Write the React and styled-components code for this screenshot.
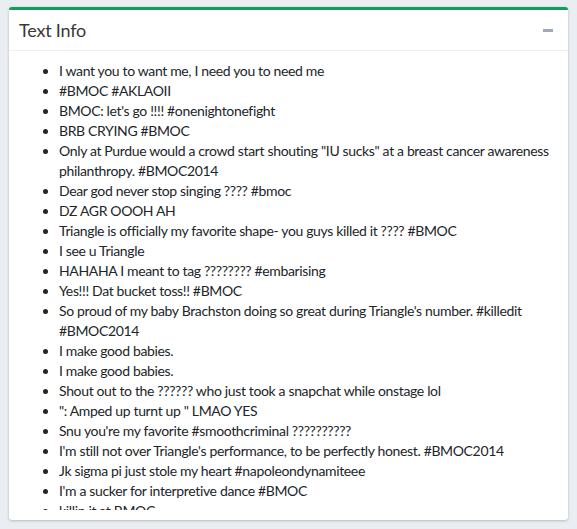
import React from "react";
import styled, { createGlobalStyle } from "styled-components";

const GlobalStyle = createGlobalStyle`
  html, body {
    margin: 0;
    padding: 0;
    background: #eaedf1;
    font-family: Lato, "Liberation Sans", sans-serif;
    color: #212529;
  }
`;

const Page = styled.div`
  box-sizing: border-box;
  height: 529px;
  padding: 7px 9px 9px 9px;
`;

const Card = styled.section`
  box-sizing: border-box;
  height: 513px;
  display: flex;
  flex-direction: column;
  background: #fff;
  border-top: 3px solid #0f9f59;
  border-radius: 3px;
  box-shadow: 0 0 1px rgba(0, 0, 0, 0.125), 0 1px 3px rgba(0, 0, 0, 0.2);
  overflow: hidden;
`;

const CardHeader = styled.header`
  box-sizing: border-box;
  height: 41px;
  flex: 0 0 auto;
  display: flex;
  align-items: center;
  justify-content: space-between;
  padding: 0 10px;
  border-bottom: 1px solid #f0f0f0;
`;

const Title = styled.h3`
  margin: 0;
  font-size: 18px;
  font-weight: 400;
  color: #383838;
  letter-spacing: -0.2px;
`;

const ToolButton = styled.button`
  border: 0;
  background: transparent;
  padding: 0;
  margin-right: 5px;
  width: 10px;
  height: 16px;
  display: flex;
  align-items: center;
  cursor: pointer;
`;

const MinusBar = styled.span`
  display: block;
  width: 10px;
  height: 3px;
  background: #a0a7b7;
`;

const CardBody = styled.div`
  flex: 1 1 auto;
  min-height: 0;
  display: flex;
  padding: 10px;
`;

const Scroller = styled.div`
  flex: 1 1 auto;
  overflow: hidden;
`;

const List = styled.ul`
  margin: 0;
  padding-left: 40px;
  font-size: 14px;
  line-height: 20px;
  letter-spacing: -0.35px;
`;

const Item = styled.li``;

const texts = [
  "I want you to want me, I need you to need me",
  "#BMOC #AKLAOII",
  "BMOC: let's go !!!! #onenightonefight",
  "BRB CRYING #BMOC",
  'Only at Purdue would a crowd start shouting "IU sucks" at a breast cancer awareness philanthropy. #BMOC2014',
  "Dear god never stop singing ???? #bmoc",
  "DZ AGR OOOH AH",
  "Triangle is officially my favorite shape- you guys killed it ???? #BMOC",
  "I see u Triangle",
  "HAHAHA I meant to tag ???????? #embarising",
  "Yes!!! Dat bucket toss!! #BMOC",
  "So proud of my baby Brachston doing so great during Triangle's number. #killedit #BMOC2014",
  "I make good babies.",
  "I make good babies.",
  "Shout out to the ?????? who just took a snapchat while onstage lol",
  '": Amped up turnt up " LMAO YES',
  "Snu you're my favorite #smoothcriminal ??????????",
  "I'm still not over Triangle's performance, to be perfectly honest. #BMOC2014",
  "Jk sigma pi just stole my heart #napoleondynamiteee",
  "I'm a sucker for interpretive dance #BMOC",
  "killin it at BMOC",
];

export default function App() {
  return (
    <>
      <GlobalStyle />
      <Page>
        <Card>
          <CardHeader>
            <Title>Text Info</Title>
            <ToolButton aria-label="collapse">
              <MinusBar />
            </ToolButton>
          </CardHeader>
          <CardBody>
            <Scroller>
              <List>
                {texts.map((t, i) => (
                  <Item key={i}>{t}</Item>
                ))}
              </List>
            </Scroller>
          </CardBody>
        </Card>
      </Page>
    </>
  );
}
